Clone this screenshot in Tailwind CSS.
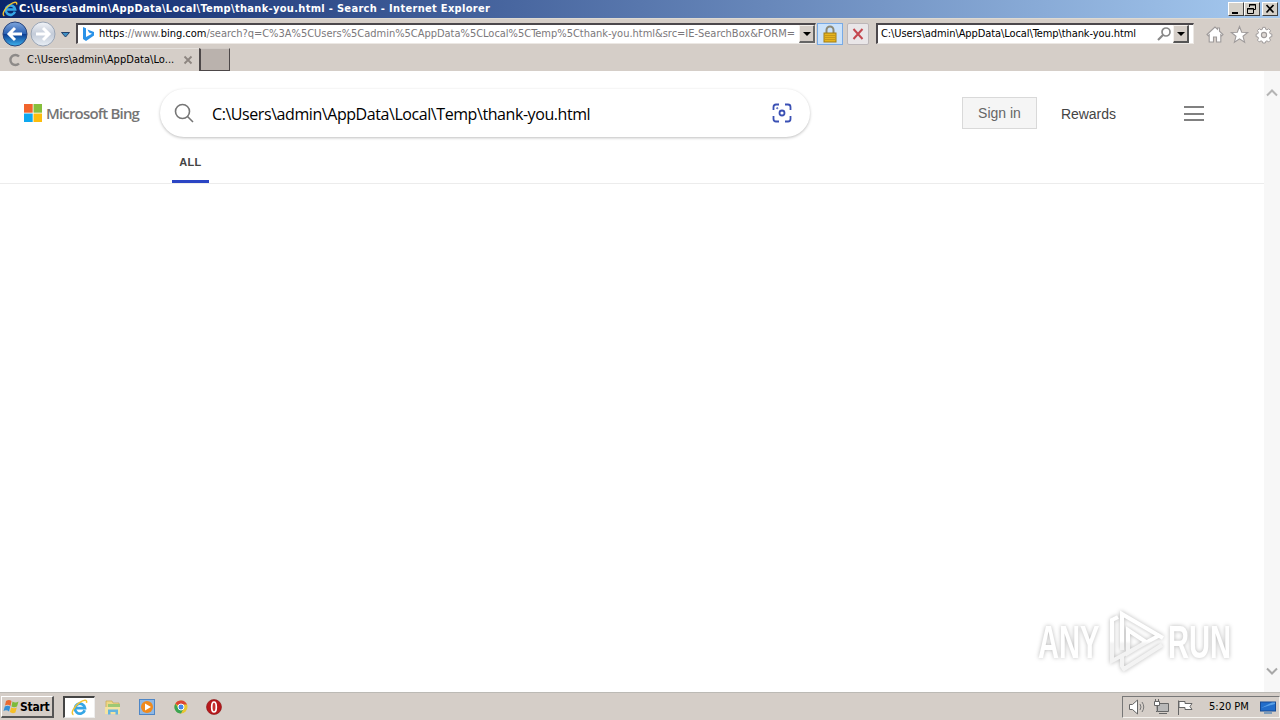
<!DOCTYPE html>
<html lang="en">
<head>
<meta charset="utf-8">
<title>Search - Internet Explorer</title>
<script src="https://cdn.jsdelivr.net/npm/@tailwindcss/browser@4"></script>
</head>
<body class="w-[1280px] h-[720px] overflow-hidden bg-white">
<svg class="absolute w-0 h-0">
  <defs>
    <linearGradient id="blue" x1="0" y1="0" x2="0" y2="1"><stop offset="0" stop-color="#7fa6dc"/><stop offset=".48" stop-color="#2c62b4"/><stop offset=".52" stop-color="#0d3f94"/><stop offset="1" stop-color="#3fb4ee"/></linearGradient>
    <linearGradient id="pale" x1="0" y1="0" x2="0" y2="1"><stop offset="0" stop-color="#f2f4f8"/><stop offset=".5" stop-color="#c3cbd8"/><stop offset="1" stop-color="#e8eef5"/></linearGradient>
    <linearGradient id="mark" gradientUnits="userSpaceOnUse" x1="0" y1="0" x2="0" y2="70"><stop offset=".5" stop-color="#fff"/><stop offset=".54" stop-color="#f3f3f3"/></linearGradient>
    <symbol id="ie" viewBox="0 0 16 16">
      <path d="M12.900 10.600A4.700 4.700 0 1 1 13.100 8.500H4.500" fill="none" stroke="#35a6e6" stroke-width="2.600"/>
      <path d="M2.300 14.800C-.8 13.500 3 7 8 3.500 12 .7 15.500 .2 14.600 3.600" fill="none" stroke="#f2c230" stroke-width="1.400"/>
    </symbol>
  </defs>
</svg>
<div class="flex flex-col w-[1280px] h-[720px] font-['DejaVu_Sans_Condensed','DejaVu_Sans',sans-serif] text-[11px] text-black whitespace-nowrap">

  <!-- title bar -->
  <header class="flex items-center h-[18px] shrink-0 pl-[2px] pr-[2px] bg-linear-to-r/srgb from-[#0a246a] to-[#a6caf0]">
    <svg class="w-4 h-4"><use href="#ie"/></svg>
    <span class="ml-[1px] text-white font-bold tracking-[0.31px] leading-[18px]">C:\Users\admin\AppData\Local\Temp\thank-you.html - Search - Internet Explorer</span>
    <div class="ml-auto flex">
      <div class="w-4 h-[14px] bg-[#d4d0c8] border border-t-white border-l-white border-r-[#404040] border-b-[#404040]"><svg width="14" height="12"><path d="M3 9h6v2H3z"/></svg></div>
      <div class="w-4 h-[14px] bg-[#d4d0c8] border border-t-white border-l-white border-r-[#404040] border-b-[#404040]"><svg width="14" height="12" fill="none" stroke="#000"><path d="M4.500 4V1.500h6v5H9M4 2h7M2.500 5.500h6v5h-6zM2 6h7"/></svg></div>
      <div class="ml-[2px] w-4 h-[14px] bg-[#d4d0c8] border border-t-white border-l-white border-r-[#404040] border-b-[#404040]"><svg width="14" height="12" stroke="#000" stroke-width="1.700"><path d="M3.500 2l7 7.500M10.500 2l-7 7.500"/></svg></div>
    </div>
  </header>

  <!-- address row -->
  <div class="flex items-center h-[30px] shrink-0 bg-[#d5cec8] border-t border-[#dedad2]">
    <svg class="ml-[2px] shrink-0" width="70" height="28" viewBox="0 0 70 28">
      <circle cx="13" cy="14" r="12" fill="url(#blue)" stroke="#29457c"/>
      <path d="M20 14H7.500M13 8l-6 6 6 6" fill="none" stroke="#fff" stroke-width="3"/>
      <circle cx="41" cy="14" r="12" fill="url(#pale)" stroke="#9aa5b5"/>
      <path d="M34 14h12.500M41 8l6 6-6 6" fill="none" stroke="#fff" stroke-width="3"/>
      <path d="M59.500 12.500h8l-4 4.500z" fill="#3e8fc4" stroke="#23416b"/>
    </svg>
    <div class="ml-[4px] w-[740px] h-[21px] flex items-center bg-white border border-t-2 border-l-2 border-t-[#4c484c] border-l-[#4c484c] border-[#ece8e4]">
      <svg class="ml-[2px] shrink-0" width="16" height="16"><path d="M3 1l3 1.200V11l6-3.200-3-1.300L7.500 3.500 14 6v3.500L6 15l-3-2z" fill="#2a92e8"/></svg>
      <span class="ml-[3px] w-[699px] overflow-hidden text-[#7b787b] tracking-[-0.02px] leading-[16px]"><span class="text-black">https</span>://www.<span class="text-black">bing.com</span>/search?q=C%3A%5CUsers%5Cadmin%5CAppData%5CLocal%5CTemp%5Cthank-you.html&amp;src=IE-SearchBox&amp;FORM=</span>
      <div class="ml-auto w-4 h-[18px] bg-[#d5cec8] border border-t-[#f4f0ec] border-l-[#f4f0ec] border-r-2 border-b-2 border-r-[#666] border-b-[#666]"><svg width="13" height="15"><path d="M3 6h8l-4 4z"/></svg></div>
    </div>
    <div class="ml-[1px] w-[26px] h-[22px] bg-[#cbe2fa] border border-[#78aae6] flex justify-center items-center">
      <svg width="16" height="18"><path d="M4.500 9V5a3.500 3.500 0 0 1 7 0v4" fill="none" stroke="#8b8875" stroke-width="2"/><rect x="2" y="8" width="12" height="9" fill="#e6b41e" stroke="#a27c12"/><path d="M3 10.500h10M3 12.500h10M3 14.500h10" stroke="#b98b16" stroke-width=".7"/></svg>
    </div>
    <div class="ml-[4px] w-[22px] h-[22px] bg-[#e9e6e8] border border-[#bcb6b8] rounded-[2px]"><svg width="20" height="20" stroke="#c4474f" stroke-width="2"><path d="M5.500 5l9 10M14.500 5l-9 10"/></svg></div>
    <div class="ml-[7px] w-[318px] h-[21px] flex items-center bg-white border border-t-2 border-l-2 border-t-[#4c484c] border-l-[#4c484c] border-[#ece8e4]">
      <span class="ml-[3px] tracking-[-0.09px] leading-[16px]">C:\Users\admin\AppData\Local\Temp\thank-you.html</span>
      <svg class="ml-auto" width="16" height="16" fill="none" stroke="#888" stroke-width="1.700"><circle cx="9" cy="6" r="4"/><path d="M6 9l-5 5" stroke-width="2.200"/></svg>
      <div class="mr-[4px] w-4 h-[18px] bg-[#d5cec8] border border-t-[#f4f0ec] border-l-[#f4f0ec] border-r-2 border-b-2 border-r-[#555] border-b-[#555]"><svg width="13" height="15"><path d="M3 6h8l-4 4z"/></svg></div>
    </div>
    <svg class="ml-[11px] mt-[2px]" width="70" height="20" fill="#fff" stroke="#9e9a9a" stroke-width="1.100">
      <path d="M2 9.500L10 2l2.500 2.200V3h2v3.200L18 9.500l-1.200 1.200-1-.9V17H11.500v-5h-3v5H4.200V9.800l-1 .9z"/>
      <path d="M34.500 1.500l2.200 5.700 6 .3-4.700 3.800 1.600 5.900-5.100-3.400-5.100 3.400 1.600-5.900-4.700-3.800 6-.3z"/>
      <path transform="translate(59 10) scale(.9) translate(-59 -10.500)" d="M57.600 2h2.800l.5 2.200 1.400.6 2-1.200 2 2-1.200 2 .6 1.400 2 .5v2.800l-2 .5-.6 1.400 1.200 2-2 2-2-1.200-1.400.6-.5 1.800h-2.800l-.5-1.800-1.400-.6-2 1.200-2-2 1.200-2-.6-1.400-2-.5V9.500l2-.5.6-1.400-1.200-2 2-2 2 1.200 1.400-.6z"/><circle cx="59" cy="10" r="2.600" fill="#ddd8d4"/>
    </svg>
  </div>

  <!-- tab row -->
  <div class="flex h-[23px] shrink-0 bg-[#d5cec8]">
    <div class="w-[199px] flex items-center pl-[8px] border-t border-[#e4e0dc]">
      <svg width="14" height="14" fill="none" stroke="#8d8a88" stroke-width="2.400"><path d="M11 3.500A5 5 0 1 0 11 10.500"/></svg>
      <span class="ml-[5px] w-[149px] tracking-[0.05px]">C:\Users\admin\AppData\Lo...</span>
      <svg class="ml-[7px]" width="10" height="10" stroke="#8d8580" stroke-width="1.800"><path d="M1.500 1.500l7 7M8.500 1.500l-7 7"/></svg>
    </div>
    <div class="w-[31px] h-[23px] bg-[#bab2ad] border border-t-[#d0cac5] border-l-2 border-[#4d4849]"></div>
  </div>

  <!-- page -->
  <main class="flex h-[621px] shrink-0 bg-white">
    <div class="relative w-[1264px]">
      <div class="flex h-[74px] pt-[18px]">
        <div class="flex items-center w-[160px] h-[48px] pl-[24px]">
          <svg width="18" height="18"><path d="M0 0h8.700v8.700H0z" fill="#f1642c"/><path d="M9.500 0H18v8.700H9.500z" fill="#86bf3c"/><path d="M0 9.500h8.700V18H0z" fill="#0ea8ef"/><path d="M9.500 9.500H18V18H9.500z" fill="#fcbd0d"/></svg>
          <span class="ml-[4px] font-['Open_Sans',sans-serif] font-semibold text-[15px] tracking-[-0.83px] text-[#757575] leading-[20px]">Microsoft Bing</span>
        </div>
        <div class="flex items-center w-[650px] h-[48px] rounded-full bg-white shadow-[0_1px_3px_rgba(0,0,0,0.26)] pl-[14px] pr-[18px]">
          <svg width="20" height="20" fill="none" stroke="#767676" stroke-width="1.600"><circle cx="8.500" cy="8.500" r="7"/><path d="M13.500 13.500l5.500 5.500"/></svg>
          <span class="ml-[18px] mt-[2px] font-['Open_Sans',sans-serif] text-[16px] tracking-[-0.43px]">C:\Users\admin\AppData\Local\Temp\thank-you.html</span>
          <svg class="ml-auto" width="20" height="20" fill="none" stroke="#3a50b4" stroke-width="1.800"><path d="M1.500 7V4Q1.500 1.500 4 1.500h3M13 1.500h3q2.500 0 2.500 2.500v3M18.500 13v3q0 2.500-2.500 2.500h-3M7 18.500H4q-2.500 0-2.500-2.500v-3"/><circle cx="10" cy="10" r="2.500"/><circle cx="5.200" cy="5.200" r=".6" stroke-width="1"/></svg>
        </div>
        <div class="ml-[152px] mt-[8px] w-[75px] h-[32px] bg-[#f5f5f5] border border-[#d9d9d9] text-center font-['Liberation_Sans',sans-serif] text-[14px] leading-[31px] text-[#666]">Sign in</div>
        <div class="ml-[24px] mt-[8px] font-['Liberation_Sans',sans-serif] text-[14px] leading-[34px] text-[#444] tracking-[-0.05px]">Rewards</div>
        <div class="ml-auto mr-[60px] mt-[17px] flex flex-col gap-[4px]">
          <div class="w-5 h-[2px] bg-[#808080]"></div><div class="mt-[1px] w-5 h-[2px] bg-[#808080]"></div><div class="w-5 h-[2px] bg-[#808080]"></div>
        </div>
      </div>
      <nav class="h-[39px] pl-[172px] border-b border-[#ececec]">
        <div class="w-[37px] h-[38px] border-b-3 border-[#2b45c4] text-center font-['Liberation_Sans',sans-serif] font-bold text-[11px] leading-[34px] text-[#444] tracking-[0.3px]">ALL</div>
      </nav>
      <!-- watermark -->
      <div class="absolute left-[1034px] top-[535px] w-[210px] h-[70px]">
        <svg width="210" height="70" viewBox="0 0 210 70" class="overflow-visible drop-shadow-[0_0_2px_rgba(0,0,0,0.28)]" font-family="Liberation Sans" font-weight="bold" font-size="47" fill="url(#mark)">
          <g transform="translate(4 52) scale(.62 1)"><text>ANY</text></g>
          <g transform="translate(134 52) scale(.62 1)"><text>RUN</text></g>
          <path d="M84 11l-6 3v41l48-26M88 44V8l41 24M88 50V60l2 3 38-24M94 24v23l18-11z" fill="none" stroke="url(#mark)" stroke-width="4"/>
        </svg>
      </div>
    </div>
    <div class="w-4 bg-[#f7f7f7] flex flex-col justify-between items-center pt-[17px] pb-[16px]">
      <svg width="12" height="9" fill="none" stroke="#b4b4b4" stroke-width="2"><path d="M1 7.500l5-5 5 5"/></svg>
      <svg width="12" height="9" fill="none" stroke="#a8a8a8" stroke-width="2"><path d="M1 1.500l5 5 5-5"/></svg>
    </div>
  </main>

  <!-- taskbar -->
  <footer class="flex h-[28px] shrink-0 bg-[#d5cec8] border-t border-[#bcbab5]">
    <div class="ml-[1px] mt-[3px] w-[53px] h-[22px] flex items-center border border-t-white border-l-white border-r-2 border-b-2 border-r-[#555] border-b-[#555] font-bold">
      <svg class="ml-[1px]" width="17" height="17"><path d="M3 3q3-2 5.500 0L7.500 8Q5 6 2 7.500z" fill="#ea6a30"/><path d="M9.500 3.500q3 2 6 0L14 8.500q-3 1.500-5.500 0z" fill="#7cbb3b"/><path d="M1.800 8.500q3-1.500 5.500 0L6 13.500q-2.500-2-5.500-.5z" fill="#358fd6"/><path d="M8.200 9.500q3 1.500 5.600 0l-1.400 5q-3 1.500-5.500-.5z" fill="#f5bf28"/></svg>
      <span class="tracking-[-0.25px] text-[12px]">Start</span>
    </div>
    <div class="ml-[9px] mt-[3px] w-[32px] h-[22px] flex items-center justify-center bg-white border border-t-2 border-l-2 border-t-[#444] border-l-[#444] border-[#eee]"><svg class="w-[17px] h-[17px]"><use href="#ie"/></svg></div>
    <svg class="ml-[9px] mt-[6px]" width="18" height="17"><path d="M2 2h6l1 2h6v10H2z" fill="#edd886" stroke="#c7a850" stroke-width=".7"/><path d="M4 5h12v3H4z" fill="#9dc875"/><path d="M1 8h15v7H1z" fill="#f3e3a1"/><path d="M4 15.500v-5h10v5h-2.500V13h-5v2.500z" fill="#64b4de"/></svg>
    <svg class="ml-[17px] mt-[6px]" width="16" height="16"><rect x=".5" y=".5" width="15" height="15" fill="#8fb8e4" stroke="#4e86c6"/><circle cx="8" cy="8" r="6" fill="#f08a1c"/><path d="M6 4.500l6 3.500-6 3.500z" fill="#fff"/></svg>
    <svg class="ml-[19px] mt-[7px]" width="14" height="14" viewBox="0 0 14 14"><circle cx="7" cy="7" r="6.500" fill="#e9c632"/><path d="M7 7L1.300 3.700A6.500 6.500 0 0 1 13 4.500H7z" fill="#dc4535"/><path d="M1.300 3.700A6.500 6.500 0 0 0 7 13.500l2.500-5L4.500 8z" fill="#3ba453"/><circle cx="7" cy="7" r="3" fill="#4587e8" stroke="#fff"/></svg>
    <svg class="ml-[18px] mt-[6px]" width="16" height="16"><circle cx="8" cy="8" r="7.500" fill="#b7191c" stroke="#871012" stroke-width=".6"/><ellipse cx="8" cy="8" rx="2.300" ry="5" fill="#c8302e" stroke="#fff" stroke-width="1.700"/></svg>
    <div class="ml-auto mt-[3px] w-[158px] h-[22px] flex items-center border border-t-[#777] border-l-[#777] border-[#f5f2ee] pl-[6px]">
      <svg width="64" height="18" fill="#fff" stroke="#666">
        <path d="M.5 6.500h3L8.500 2v14l-5-4.500h-3z"/><path d="M11 6q2 3 0 6M13 4q3.500 5 0 10" fill="none" stroke="#777"/>
        <path d="M28.500 5.500h11v8h-11z" fill="#b8b8b8"/><path d="M30 15.500h8" /><path d="M25.500 3.500h5v4h-5zM28 7.500v6h-1M26.500 1v2.500M29.500 1v2.500"/>
        <path d="M49.500 17V2.500"/><path d="M50 3.500h6v2h7l-2 3 2 3h-7v-2h-6z"/>
      </svg>
      <span class="ml-[16px] w-[42px] tracking-[0px]">5:20 PM</span>
      <svg class="ml-[9px] mr-[2px] shrink-0" width="17" height="15"><rect x=".5" y="2" width="15" height="9" fill="#226dca" stroke="#174b94"/><path d="M1 8L12 2.500h3V4z" fill="#59a1e7"/><path d="M4 12h8v2H4z" fill="#7e9cba"/></svg>
    </div>
  </footer>
</div>
</body>
</html>
